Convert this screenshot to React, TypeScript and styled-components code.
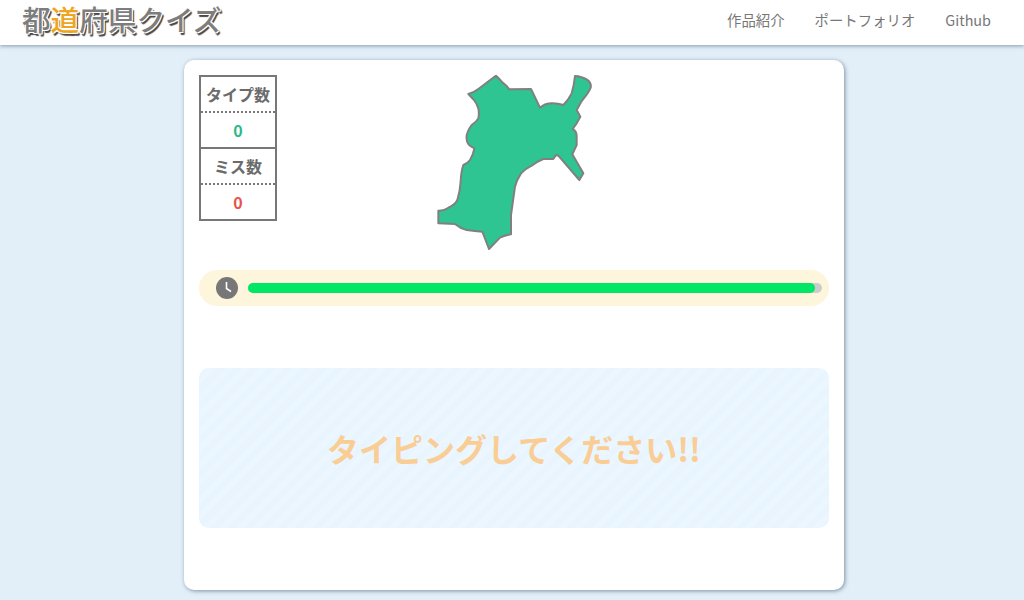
import React from 'react';
import styled, { createGlobalStyle } from 'styled-components';

const GlobalStyle = createGlobalStyle`
  html, body {
    margin: 0;
    padding: 0;
    height: 100%;
    overflow: hidden;
    background: #e2eff9;
    font-family: "Noto Sans CJK JP", "Noto Sans", sans-serif;
  }
`;

const Page = styled.div`
  width: 1024px;
  height: 600px;
  display: flex;
  flex-direction: column;
  background: #e2eff9;
`;

const Header = styled.header`
  height: 45px;
  flex: none;
  box-sizing: border-box;
  background: #fff;
  display: flex;
  align-items: center;
  justify-content: space-between;
  padding: 0 33px 6px 22px;
  box-shadow: 0 1px 4px rgba(60, 80, 100, 0.55);
  position: relative;
  z-index: 1;
`;

const Logo = styled.div`
  font-size: 28.6px;
  font-weight: 500;
  line-height: 40px;
  height: 40px;
  margin-top: -1px;
  white-space: nowrap;
  color: #7d7d7d;
  text-shadow:
    -1px -1px 0 #fff, 1px -1px 0 #fff, -1px 1px 0 #fff, 1px 1px 0 #fff,
    2px 2px 1px #4a4a4a, 2px 3px 1px #4a4a4a;
`;

const LogoMark = styled.span`
  color: #f0a520;
`;

const Nav = styled.nav`
  display: flex;
  gap: 30px;
`;

const NavLink = styled.a`
  font-size: 14.4px;
  line-height: 20px;
  color: #777;
  text-decoration: none;
`;

const Main = styled.main`
  flex: 1;
  display: flex;
  justify-content: center;
  padding: 15px 0 0 4px;
`;

const Card = styled.section`
  width: 660px;
  height: 530px;
  box-sizing: border-box;
  padding: 15px;
  background: #fff;
  border-radius: 10px;
  box-shadow: 1px 1px 4px rgba(60, 80, 100, 0.6);
`;

const TopRow = styled.div`
  display: grid;
  grid-template-columns: 78px 1fr 78px;
  align-items: start;
`;

const Score = styled.div`
  box-sizing: border-box;
  width: 78px;
  height: 146px;
  border: 2px solid #777;
  display: flex;
  flex-direction: column;
`;

const ScoreCell = styled.div<{ $rule?: 'dotted' | 'solid'; $color?: string }>`
  flex: 1;
  display: flex;
  align-items: center;
  justify-content: center;
  font-size: 16px;
  font-weight: 700;
  color: ${(p) => p.$color || '#6b6b6b'};
  border-bottom: ${(p) => (p.$rule ? `2px ${p.$rule} #777` : 'none')};
`;

const MapWrap = styled.div`
  display: flex;
  justify-content: center;
  margin-left: 2px;
`;

const Timer = styled.div`
  margin-top: 18px;
  height: 36px;
  border-radius: 18px;
  background: #fdf6dd;
  display: flex;
  align-items: center;
  padding: 0 7px 0 17px;
  gap: 10px;
`;

const Track = styled.div`
  flex: 1;
  height: 10px;
  border-radius: 5px;
  background: #ccc;
`;

const Fill = styled.div`
  height: 100%;
  border-radius: 5px;
  background: #00e765;
`;

const TypeArea = styled.div`
  margin-top: 62px;
  height: 160px;
  border-radius: 10px;
  display: flex;
  align-items: center;
  justify-content: center;
  font-size: 32px;
  font-weight: 700;
  color: #f9cd94;
  background: repeating-linear-gradient(
    -45deg,
    #e8f4fe 0 6px,
    #ebf6ff 6px 12px
  );
`;

// traced from the reference, coordinates are 3x page pixels
const prefecturePath =
  'M213 32Q224 42 232 52Q243 60 253 73L318 72L345 128Q360 116 375 115Q395 113 415 120Q430 105 440 85Q447 60 450 33Q470 34 486 44Q500 54 497 68Q492 82 470 108L455 135L466 155L455 175L443 192Q455 198 455 215L455 240L442 268L475 325L463 345L400 272L393 270L385 282L355 282Q335 290 320 302Q300 312 288 325Q275 345 270 365L258 450L258 508Q240 510 225 518L192 552L172 500Q150 498 125 495Q105 490 90 477L40 475L40 437Q60 436 70 428Q90 420 97 405Q105 380 107 350Q108 320 115 300Q128 295 135 285Q145 268 148 250Q125 240 125 222Q122 205 140 180Q155 170 160 160Q163 145 160 130Q155 115 147 105L130 87Q148 82 160 72Z';

const PrefectureMap = () => (
  <svg width="180" height="177" viewBox="0 30 540 531">
    <path d={prefecturePath} fill="#2ec592" stroke="#808080" strokeWidth="6" strokeLinejoin="round" />
  </svg>
);

const ClockIcon = () => (
  <svg width="22" height="22" viewBox="0 0 22 22">
    <circle cx="11" cy="11" r="11" fill="#777" />
    <path d="M10.5 5V11.5L15 14.5" fill="none" stroke="#fff" strokeWidth="1.6" />
  </svg>
);

export default function App() {
  return (
    <Page>
      <GlobalStyle />
      <Header>
        <Logo>
          都<LogoMark>道</LogoMark>府県クイズ
        </Logo>
        <Nav>
          <NavLink>作品紹介</NavLink>
          <NavLink>ポートフォリオ</NavLink>
          <NavLink>Github</NavLink>
        </Nav>
      </Header>
      <Main>
        <Card>
          <TopRow>
            <Score>
              <ScoreCell $rule="dotted">タイプ数</ScoreCell>
              <ScoreCell $rule="solid" $color="#2eb88a">0</ScoreCell>
              <ScoreCell $rule="dotted">ミス数</ScoreCell>
              <ScoreCell $color="#e8524a">0</ScoreCell>
            </Score>
            <MapWrap>
              <PrefectureMap />
            </MapWrap>
          </TopRow>
          <Timer>
            <ClockIcon />
            <Track>
              <Fill style={{ width: '98.8%' }} />
            </Track>
          </Timer>
          <TypeArea>タイピングしてください!!</TypeArea>
        </Card>
      </Main>
    </Page>
  );
}
